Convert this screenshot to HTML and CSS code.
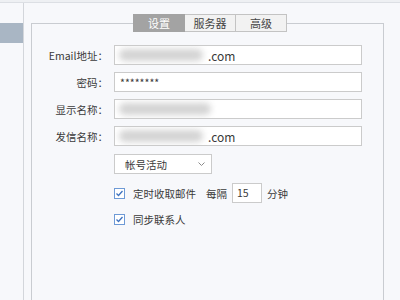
FILE: index.html
```html
<!DOCTYPE html>
<html lang="zh-CN">
<head>
    <meta charset="UTF-8">
    <title>帐号设置</title>
    <link rel="stylesheet" href="styles.css">
</head>
<body>
    <div class="topbar"></div>
    <div class="layout">
        <div class="sidebar">
            <div class="side-item active"></div>
        </div>
        <div class="main">
            <fieldset class="panel">
                <legend class="tabs">
                    <span class="tab active">设置</span>
                    <span class="tab">服务器</span>
                    <span class="tab">高级</span>
                </legend>
                <div class="form-row">
                    <label>Email地址<span class="colon">：</span></label>
                    <div class="field"><span class="blur"></span><span class="domain">.com</span></div>
                </div>
                <div class="form-row">
                    <label>密码<span class="colon">：</span></label>
                    <div class="field"><span class="pwd">********</span></div>
                </div>
                <div class="form-row">
                    <label>显示名称<span class="colon">：</span></label>
                    <div class="field"><span class="blur wide"></span></div>
                </div>
                <div class="form-row">
                    <label>发信名称<span class="colon">：</span></label>
                    <div class="field"><span class="blur"></span><span class="domain">.com</span></div>
                </div>
                <div class="form-row">
                    <label></label>
                    <div class="select">
                        <span>帐号活动</span>
                        <svg width="7" height="4" viewBox="0 0 7 4"><path d="M0.5 0.5 L3.5 3.5 L6.5 0.5" fill="none" stroke="#8a8a8a" stroke-width="1"/></svg>
                    </div>
                </div>
                <div class="check-row first">
                    <span class="check"><svg width="11" height="11" viewBox="0 0 11 11"><rect x="0.5" y="0.5" width="10" height="10" fill="#fff" stroke="#6e9ad6"/><path d="M2.5 5.5 L4.5 7.5 L8.5 3" fill="none" stroke="#3e72bf" stroke-width="1.3"/></svg></span>
                    <span class="check-text">定时收取邮件</span>
                    <span class="every">每隔</span>
                    <span class="num">15</span>
                    <span>分钟</span>
                </div>
                <div class="check-row">
                    <span class="check"><svg width="11" height="11" viewBox="0 0 11 11"><rect x="0.5" y="0.5" width="10" height="10" fill="#fff" stroke="#6e9ad6"/><path d="M2.5 5.5 L4.5 7.5 L8.5 3" fill="none" stroke="#3e72bf" stroke-width="1.3"/></svg></span>
                    <span class="check-text">同步联系人</span>
                </div>
            </fieldset>
        </div>
    </div>
</body>
</html>
```

FILE: styles.css
```css
body {
    margin: 0;
    background-color: #f7f8fb;
    font-family: "Noto Sans CJK SC", "Noto Sans", sans-serif;
    font-size: 10.5px;
    color: #3a3a3a;
    overflow: hidden;
}
.topbar {
    height: 2px;
    background-color: #eef0f3;
    border-bottom: 1px solid #dcdfe4;
}
.layout {
    display: flex;
    height: 297px;
}
.sidebar {
    width: 23px;
    border-right: 1px solid #d3d6db;
    padding-top: 20px;
}
.side-item.active {
    height: 20px;
    background-color: #a9b6c4;
}
.main {
    padding: 11px 0 0 7px;
    width: 353px;
}
.panel {
    margin: 0;
    padding: 0;
    border: 1px solid #c9ccd1;
    border-bottom: none;
    height: 290px;
    box-sizing: border-box;
}
.tabs {
    display: flex;
    padding: 0;
    margin-left: 101px;
}
.tab {
    width: 50px;
    height: 16px;
    line-height: 16px;
    text-align: center;
    background-color: #f2f2f2;
    border: 1px solid #c3c3c3;
    border-left: none;
    color: #444;
    font-size: 11px;
}
.tab:first-child {
    border-left: 1px solid #a8a8a8;
}
.tab.active {
    background-color: #a3a3a3;
    border-color: #a3a3a3;
    color: #fff;
}
.form-row {
    display: flex;
    align-items: center;
    margin-top: 7px;
}
.form-row:first-of-type {
    margin-top: 13px;
}
.form-row label {
    width: 76px;
    margin-right: 6px;
    text-align: right;
}
.colon {
    font-family: "Noto Sans CJK TC", sans-serif;
}
.field {
    display: flex;
    align-items: center;
    width: 242px;
    height: 18px;
    border: 1px solid #cbcbcb;
    background-color: #fff;
    padding-left: 4px;
    overflow: hidden;
}
.blur {
    width: 84px;
    height: 12px;
    background-color: #c9c9c9;
    border-radius: 6px;
    filter: blur(3px);
    opacity: 0.8;
}
.blur.wide {
    width: 92px;
}
.domain {
    margin-left: 5px;
    font-size: 12px;
}
.pwd {
    margin-left: 1px;
}
.select {
    display: flex;
    align-items: center;
    justify-content: space-between;
    width: 80px;
    height: 18px;
    padding: 0 6px 0 10px;
    border: 1px solid #cbcbcb;
    background-color: #fff;
    margin-top: 1px;
}
.check-row {
    display: flex;
    align-items: center;
    margin-left: 82px;
    height: 16px;
    margin-top: 8px;
}
.check-row.first {
    height: 20px;
    margin-top: 9px;
}
.check {
    display: flex;
    width: 11px;
    margin-right: 8px;
}
.every {
    margin-left: 10px;
}
.num {
    width: 24px;
    height: 18px;
    line-height: 18px;
    padding-left: 4px;
    margin: 0 5px 0 5px;
    border: 1px solid #cbcbcb;
    background-color: #fff;
}
```
